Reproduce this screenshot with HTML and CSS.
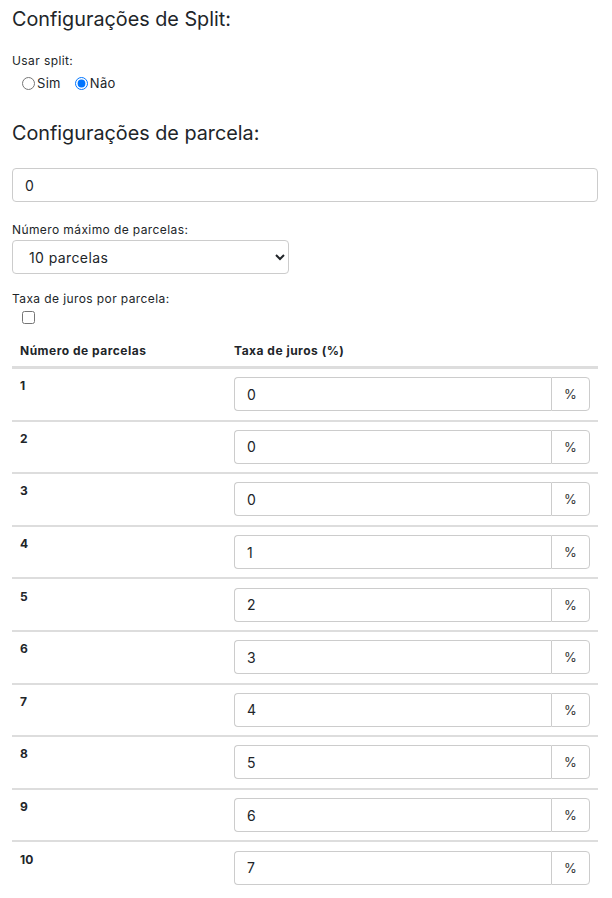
FILE: index.html
```html
<!DOCTYPE html>
<html lang="pt-BR">
<head>
<meta charset="utf-8">
<title>Configurações</title>
<link rel="stylesheet" href="styles.css">
</head>
<body>
<div class="page">
  <h3 class="title">Configurações de Split:</h3>
  <div class="field">
    <label class="label">Usar split:</label>
    <div class="radios">
      <label class="radio"><input type="radio" name="split"><span>Sim</span></label>
      <label class="radio"><input type="radio" name="split" checked><span>Não</span></label>
    </div>
  </div>

  <h3 class="title title-2">Configurações de parcela:</h3>
  <input class="control control-full" type="text" value="0">

  <label class="label label-sel">Número máximo de parcelas:</label>
  <select class="control control-select">
    <option>10 parcelas</option>
  </select>

  <label class="label label-tax">Taxa de juros por parcela:</label>
  <div class="check-wrap"><input type="checkbox" class="check"></div>

  <table class="rates">
    <thead>
      <tr><th class="col-n">Número de parcelas</th><th>Taxa de juros (%)</th></tr>
    </thead>
    <tbody>
      <tr><td class="num">1</td><td><div class="group"><input class="group-input" value="0"><span class="addon">%</span></div></td></tr>
      <tr><td class="num">2</td><td><div class="group"><input class="group-input" value="0"><span class="addon">%</span></div></td></tr>
      <tr><td class="num">3</td><td><div class="group"><input class="group-input" value="0"><span class="addon">%</span></div></td></tr>
      <tr><td class="num">4</td><td><div class="group"><input class="group-input" value="1"><span class="addon">%</span></div></td></tr>
      <tr><td class="num">5</td><td><div class="group"><input class="group-input" value="2"><span class="addon">%</span></div></td></tr>
      <tr><td class="num">6</td><td><div class="group"><input class="group-input" value="3"><span class="addon">%</span></div></td></tr>
      <tr><td class="num">7</td><td><div class="group"><input class="group-input" value="4"><span class="addon">%</span></div></td></tr>
      <tr><td class="num">8</td><td><div class="group"><input class="group-input" value="5"><span class="addon">%</span></div></td></tr>
      <tr><td class="num">9</td><td><div class="group"><input class="group-input" value="6"><span class="addon">%</span></div></td></tr>
      <tr><td class="num">10</td><td><div class="group"><input class="group-input" value="7"><span class="addon">%</span></div></td></tr>
    </tbody>
  </table>
</div>
</body>
</html>
```

FILE: styles.css
```css
* { box-sizing: border-box; }
html, body { margin: 0; padding: 0; background: #fff; }
body {
  font-family: "Inter", "Open Sans", sans-serif;
  color: #212529;
  font-size: 12px;
}
.page { padding: 0 14px 0 12px; }
.title {
  margin: 0;
  padding-top: 7px;
  font-size: 19.8px;
  font-weight: 400;
  line-height: 24px;
  color: #212529;
}
.title-2 { padding-top: 30px; }
.field { margin-top: 23px; }
.label {
  display: block;
  font-size: 12px;
  letter-spacing: 0.4px;
  line-height: 14px;
  color: #212529;
}
.radios { display: flex; gap: 14px; padding-left: 10px; margin-top: 7px; }
.radio { display: flex; align-items: center; font-size: 13px; line-height: 16px; letter-spacing: 0.3px; }
.radio input { margin: 0 2px 0 0; width: 13px; height: 13px; }
.control {
  display: block;
  height: 34px;
  border: 1px solid #ccc;
  border-radius: 4px;
  background: #fff;
  font-family: inherit;
  color: #212529;
  font-size: 14px;
}
.control-full { width: 100%; margin-top: 23px; padding: 0 12px; }
.label-sel { margin-top: 21px; }
.control-select { width: 277px; margin-top: 3px; padding: 0 12px; font-size: 14px; letter-spacing: 0.4px; }
.label-tax { margin-top: 18px; }
.check-wrap { padding-left: 10px; margin-top: 5px; height: 15px; }
.check { margin: 0; width: 13px; height: 13px; }
.rates {
  width: 100%;
  border-collapse: collapse;
  margin-top: 7px;
}
.rates th {
  text-align: left;
  font-size: 12px;
  letter-spacing: 0.5px;
  font-weight: 700;
  padding: 10px 8px 7px;
  border-bottom: 3px solid #ddd;
  line-height: 16px;
}
.rates th.col-n { width: 214px; }
.rates td {
  padding: 8.3px 8px;
  border-top: 2px solid #ddd;
  vertical-align: top;
}
.rates tbody tr:first-child td { border-top: 0; }
.num { font-weight: 700; font-size: 12px; line-height: 18px; }
.group { display: flex; height: 34px; }
.group-input {
  flex: 1;
  min-width: 0;
  height: 34px;
  border: 1px solid #ccc;
  border-right: 0;
  border-radius: 4px 0 0 4px;
  padding: 0 12px;
  font-family: inherit;
  font-size: 14px;
  color: #212529;
}
.addon {
  width: 39px;
  border: 1px solid #ccc;
  border-radius: 0 4px 4px 0;
  display: flex;
  align-items: center;
  justify-content: center;
  font-size: 13px;
  color: #333;
}
```
